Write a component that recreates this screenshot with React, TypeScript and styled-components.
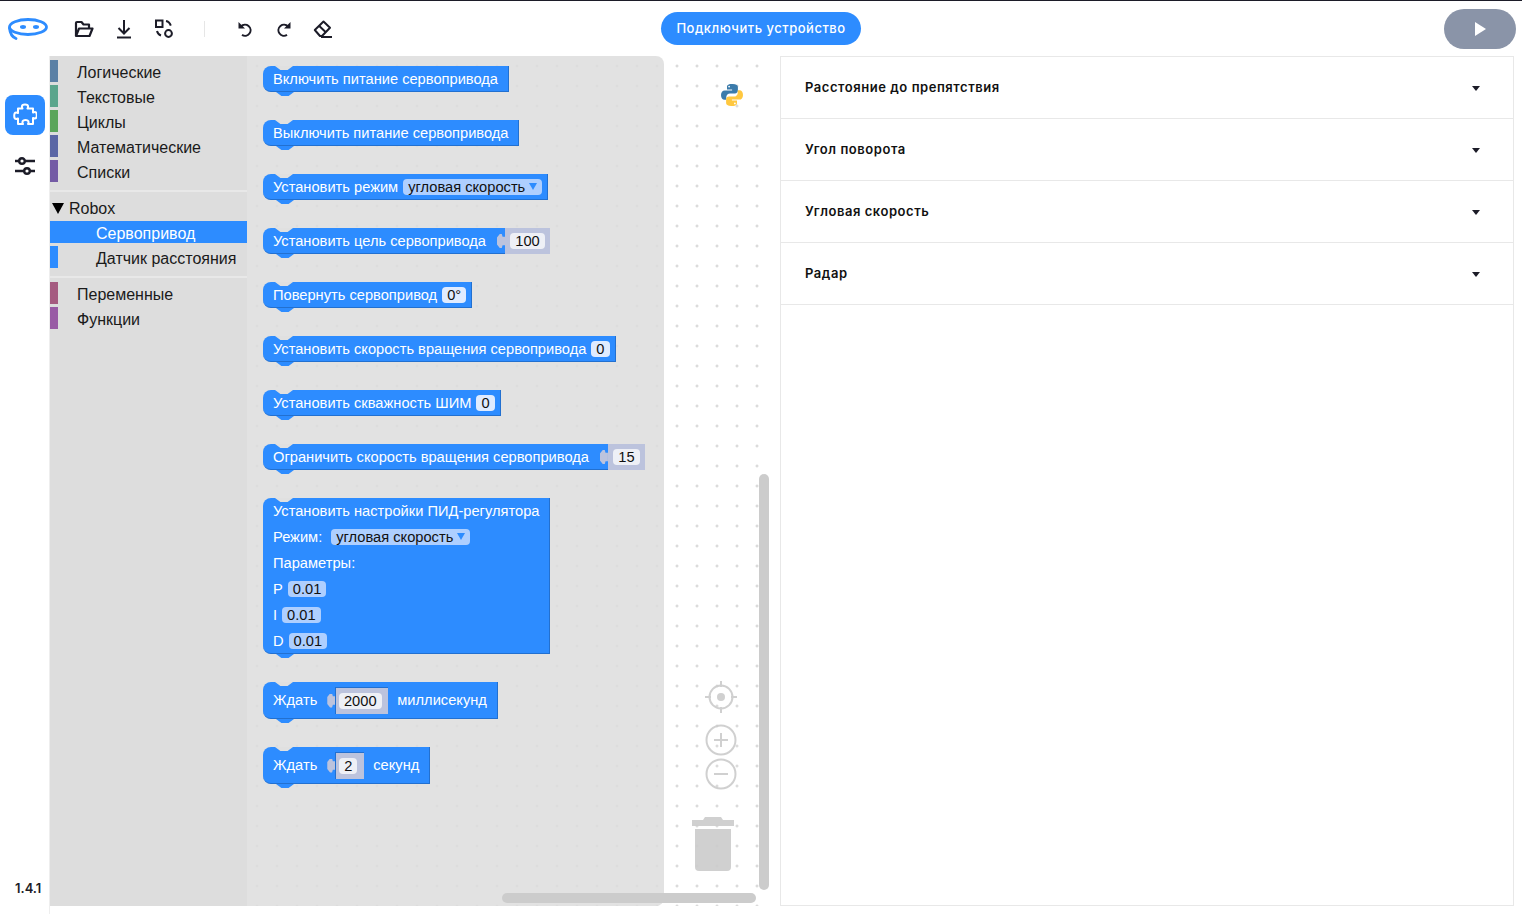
/* eslint-disable */
import React from "react";
import styled, { createGlobalStyle } from "styled-components";

const Global = createGlobalStyle`
    html, body {
        margin: 0;
        padding: 0;
        background: #fff;
    }
    * {
        box-sizing: border-box;
    }
`;

const BLUE = "#2d8cff";
const UI_FONT = `"Inter", "Noto Sans", sans-serif`;
const BLOCK_FONT = `"Liberation Sans", sans-serif`;

const Page = styled.div`
    width: 1522px;
    height: 914px;
    overflow: hidden;
    display: flex;
    flex-direction: column;
    border-top: 1px solid #1c1c28;
    font-family: ${BLOCK_FONT};
`;

const TopBar = styled.header`
    height: 55px;
    flex: none;
    display: flex;
    align-items: center;
    padding-left: 8px;
    position: relative;
`;

const ToolIcon = styled.button<{ $left: number }>`
    width: 24px;
    height: 24px;
    padding: 0;
    margin-left: ${({ $left }) => $left}px;
    border: 0;
    background: none;
    color: #1c1c28;
    display: flex;
    align-items: center;
    justify-content: center;
`;

const Divider = styled.div`
    width: 1px;
    height: 16px;
    background: #e6e6e6;
    margin-left: 28px;
`;

const Connect = styled.button`
    position: absolute;
    left: 661px;
    top: 11px;
    width: 200px;
    height: 33px;
    border: 0;
    border-radius: 17px;
    background: ${BLUE};
    color: #fff;
    font-family: ${UI_FONT};
    font-size: 13px;
    font-weight: 500;
    letter-spacing: 0.5px;
    padding: 0 0 2px;
`;

const Play = styled.button`
    position: absolute;
    left: 1444px;
    top: 8px;
    width: 72px;
    height: 40px;
    border: 0;
    border-radius: 20px;
    background: #8a94a8;
    display: flex;
    align-items: center;
    justify-content: center;
    padding: 0;
`;

const Body = styled.div`
    flex: 1;
    display: flex;
    min-height: 0;
`;

const Rail = styled.aside`
    width: 50px;
    flex: none;
    border-right: 1px solid #eeeeee;
    display: flex;
    flex-direction: column;
    align-items: center;
    padding: 39px 0 0 1px;
    position: relative;
`;

const RailActive = styled.div`
    width: 40px;
    height: 40px;
    border-radius: 8px;
    background: ${BLUE};
    display: flex;
    align-items: center;
    justify-content: center;
`;

const RailIcon = styled.div`
    width: 40px;
    height: 40px;
    margin-top: 11px;
    display: flex;
    align-items: center;
    justify-content: center;
    color: #1c1c28;
`;

const Version = styled.div`
    position: absolute;
    left: 15px;
    top: 824px;
    font-family: ${UI_FONT};
    font-size: 13px;
    font-weight: 600;
    color: #1c1c28;
`;

const Workspace = styled.div`
    width: 720px;
    height: 850px;
    flex: none;
    display: flex;
    position: relative;
    overflow: hidden;
`;

const GridLayer = styled.svg`
    position: absolute;
    inset: 0;
    width: 100%;
    height: 100%;
`;

const Toolbox = styled.nav`
    width: 197px;
    flex: none;
    background: #dddddd;
    padding-top: 4px;
    position: relative;
`;

const Row = styled.div<{ $active?: boolean; $sub?: boolean }>`
    height: 22px;
    margin-bottom: 3px;
    display: flex;
    align-items: center;
    font-size: 16px;
    color: ${({ $active }) => ($active ? "#fff" : "#1a1a1a")};
    background: ${({ $active }) => ($active ? BLUE : "transparent")};
    padding: 3px 0 0 ${({ $sub }) => ($sub ? 46 : 27)}px;
    position: relative;
    white-space: nowrap;
`;

const Chip = styled.span<{ $color: string }>`
    position: absolute;
    left: 0;
    top: 0;
    width: 8px;
    height: 22px;
    background: ${({ $color }) => $color};
`;

const GroupRow = styled.div`
    height: 22px;
    margin-bottom: 3px;
    display: flex;
    align-items: center;
    font-size: 16px;
    color: #1a1a1a;
    padding: 3px 0 0 2px;
`;

const Caret = styled.span`
    width: 0;
    height: 0;
    border-left: 6px solid transparent;
    border-right: 6px solid transparent;
    border-top: 11px solid #000;
    margin-right: 5px;
`;

const Separator = styled.div`
    height: 2px;
    background: #e8e8e8;
    margin: 8px 0 4px;
`;

const Flyout = styled.div`
    width: 417px;
    flex: none;
    background: rgba(221, 221, 221, 0.85);
    border-radius: 0 8px 8px 0;
    padding: 10px 0 0 16px;
    display: flex;
    flex-direction: column;
    align-items: flex-start;
    position: relative;
`;

const Block = styled.div<{ $tall?: boolean; $stack?: boolean; $gap?: number }>`
    position: relative;
    display: flex;
    flex-direction: ${({ $stack }) => ($stack ? "column" : "row")};
    align-items: ${({ $stack }) => ($stack ? "flex-start" : "center")};
    height: ${({ $tall, $stack }) => ($stack ? "156px" : $tall ? "37px" : "26px")};
    margin-bottom: ${({ $gap }) => $gap ?? 28}px;
    padding: ${({ $stack }) => ($stack ? "0 10px" : "0 0 0 10px")};
    background: ${BLUE};
    border-radius: 8px 0 0 8px;
    border-bottom: 1px solid #2270d0;
    border-right: 1px solid #2270d0;
    color: #fff;
    font-size: 14.67px;
    white-space: nowrap;

    &::before {
        content: "";
        position: absolute;
        left: 12px;
        top: 0;
        width: 18px;
        height: 4px;
        background: #e0e0e0;
        clip-path: polygon(0 0, 100% 0, 70% 100%, 30% 100%);
    }

    &::after {
        content: "";
        position: absolute;
        left: 13px;
        bottom: -5px;
        width: 18px;
        height: 4px;
        background: ${BLUE};
        clip-path: polygon(0 0, 100% 0, 70% 100%, 30% 100%);
    }
`;

const Label = styled.span<{ $pad?: number }>`
    margin-right: ${({ $pad }) => $pad ?? 0}px;
`;

const StackLine = styled.div<{ $field?: boolean }>`
    height: 26px;
    display: flex;
    align-items: center;
    padding-top: ${({ $field }) => ($field ? 2 : 0)}px;
`;

const Dropdown = styled.span`
    height: 16px;
    display: flex;
    align-items: center;
    background: #aecfff;
    color: #111;
    border-radius: 4px;
    padding: 0 5px;
    line-height: 16px;
`;

const DropArrow = styled.span`
    width: 0;
    height: 0;
    border-left: 4px solid transparent;
    border-right: 4px solid transparent;
    border-top: 7px solid ${BLUE};
    margin-left: 4px;
`;

const InlineField = styled.span<{ $light?: boolean }>`
    height: 16px;
    display: flex;
    align-items: center;
    background: ${({ $light }) => ($light ? "#dfebff" : "#aecfff")};
    color: #111;
    border-radius: 4px;
    padding: 0 5px;
    margin-left: 5px;
`;

const Shadow = styled.span<{ $inset?: boolean; $width?: number }>`
    position: relative;
    align-self: ${({ $inset }) => ($inset ? "center" : "stretch")};
    margin-left: ${({ $inset }) => ($inset ? 18 : 19)}px;
    width: ${({ $width }) => $width}px;
    height: ${({ $inset }) => ($inset ? "27px" : "26px")};
    margin-right: ${({ $inset }) => ($inset ? 9 : -1)}px;
    padding-right: ${({ $inset }) => ($inset ? 4 : 0)}px;
    background: #bcc3dd;
    display: flex;
    align-items: center;
    justify-content: center;
    border-top: ${({ $inset }) => ($inset ? "1px solid #2270d0" : "0")};
    border-left: ${({ $inset }) => ($inset ? "1px solid #2270d0" : "0")};

    &::before {
        content: "";
        position: absolute;
        left: ${({ $inset }) => ($inset ? -9 : -8)}px;
        top: 6px;
        width: 8px;
        height: 14px;
        background: #bcc3dd;
        clip-path: polygon(35% 0, 60% 0, 70% 20%, 100% 20%, 100% 80%, 70% 80%, 60% 100%, 35% 100%, 0 75%, 0 25%);
    }
`;

const ShadowField = styled.span`
    height: 16px;
    min-width: 16px;
    display: flex;
    align-items: center;
    justify-content: center;
    background: #eef0f6;
    color: #111;
    border-radius: 4px;
    padding: 0 5px;
`;

const Controls = styled.div`
    position: absolute;
    left: 640px;
    top: 630px;
    opacity: 0.9;
`;

const Python = styled.svg`
    position: absolute;
    left: 670px;
    top: 27px;
`;

const ScrollV = styled.div`
    position: absolute;
    left: 709px;
    top: 418px;
    width: 10px;
    height: 416px;
    border-radius: 5px;
    background: #cccccc;
`;

const ScrollH = styled.div`
    position: absolute;
    left: 452px;
    top: 837px;
    width: 254px;
    height: 10px;
    border-radius: 5px;
    background: #cccccc;
`;

const Panel = styled.section`
    width: 734px;
    height: 850px;
    flex: none;
    margin-left: 10px;
    border: 1px solid #e8e8e8;
`;

const PanelRow = styled.div`
    height: 62px;
    border-bottom: 1px solid #e8e8e8;
    display: flex;
    align-items: center;
    justify-content: space-between;
    padding: 0 33px 2px 24px;
    font-family: ${UI_FONT};
    font-size: 13px;
    font-weight: 600;
    letter-spacing: 0.55px;
    color: #111;
`;

const PanelCaret = styled.span`
    width: 0;
    height: 0;
    margin-top: 4px;
    border-left: 4px solid transparent;
    border-right: 4px solid transparent;
    border-top: 5px solid #1c1c28;
`;

const Logo = () => (
    <svg width="40" height="24" viewBox="0 0 40 24" fill="none">
        <ellipse cx="20" cy="10" rx="18.5" ry="7.5" stroke={BLUE} strokeWidth="2.8" />
        <path d="M1.500 11C2 16 4 20 8 21.500" stroke={BLUE} strokeWidth="2.800" strokeLinecap="round" />
        <ellipse cx="15" cy="10" rx="3" ry="1.900" fill={BLUE} />
        <ellipse cx="28" cy="10" rx="3" ry="1.900" fill={BLUE} />
    </svg>
);

const Folder = () => (
    <svg width="20" height="18" viewBox="0 0 20 18" fill="none" stroke="currentColor" strokeWidth="2.200" strokeLinejoin="round">
        <path d="M2 16V3a1 1 0 0 1 1-1h4.500l2 2.500H15V8" />
        <path d="M2 16H15.500L18.500 8.500H5Z" />
    </svg>
);

const Download = () => (
    <svg width="18" height="20" viewBox="0 0 18 20" fill="none" stroke="currentColor" strokeWidth="2">
        <path d="M9 1v13M3.500 9 9 14.500 14.500 9" />
        <path d="M2 18.500h14" />
    </svg>
);

const Convert = () => (
    <svg width="20" height="20" viewBox="0 0 20 20" fill="none" stroke="currentColor" strokeWidth="2">
        <rect x="2" y="1.500" width="6.500" height="6.500" />
        <circle cx="14.500" cy="14.500" r="3.400" />
        <path d="M12 2c2.200.4 4 2.200 4.800 4.600" />
        <path d="M3 12c.5 2 2 3.800 4 4.500" />
    </svg>
);

const Undo = ({ flip }: { flip?: boolean }) => (
    <svg width="16" height="16" viewBox="0 0 16 16" fill="none" style={flip ? { transform: "scaleX(-1)" } : undefined}>
        <path d="M1.500 1v6.500H8Z" fill="#1c1c28" />
        <path d="M4 5.500A5.500 5.500 0 1 1 5 13.800" stroke="#1c1c28" strokeWidth="2" />
    </svg>
);

const EraserIcon = () => (
    <svg width="20" height="20" viewBox="0 0 20 20" fill="none" stroke="currentColor" strokeWidth="2" strokeLinejoin="round">
        <path d="M1.800 11 10.500 2.500 17 8.800 9 17H7Z" />
        <path d="M6 6.800 12.800 13.200" />
        <path d="M8 18H19" />
    </svg>
);

const Puzzle = () => (
    <svg width="24" height="24" viewBox="0 0 24 24" fill="none" stroke="#fff" strokeWidth="2" strokeLinejoin="round">
        <path d="M9.500 5.500c-.4-.8-.6-1.200-.6-1.800 0-1.300 1.400-2.300 3.100-2.300s3.100 1 3.100 2.300c0 .6-.2 1-.6 1.800H20V9.500c.8-.4 1.200-.6 1.800-.6 1.200 0 2 1.300 2 3.350s-.8 3.350-2 3.350c-.6 0-1-.2-1.800-.6V21H15c.4-.8.6-1.200.6-1.800 0-1.200-1.500-2.200-3.100-2.200s-3.100 1-3.100 2.200c0 .6.2 1 .6 1.800H5V15.500c-.8.4-1.200.6-1.800.6-1.200 0-2-1.300-2-3.350s.8-3.350 2-3.350c.6 0 1 .2 1.800.6V5.500Z" />
    </svg>
);

const Sliders = () => (
    <svg width="24" height="20" viewBox="0 0 24 20" fill="none" stroke="currentColor" strokeWidth="2.400">
        <path d="M2 5h4M12 5h10M2 15h9M17 15h5" />
        <circle cx="9" cy="5" r="2.800" />
        <circle cx="14" cy="15" r="2.800" />
    </svg>
);

const Grid = () => (
    <GridLayer>
        <defs>
            <pattern id="dots" x="-3" y="0" width="20" height="20" patternUnits="userSpaceOnUse">
                <path d="M10 8.500v3M8.500 10h3" stroke="#cfcfcf" strokeWidth="1" />
            </pattern>
        </defs>
        <rect width="100%" height="100%" fill="url(#dots)" />
    </GridLayer>
);

const ControlIcons = () => (
    <svg width="60" height="200" viewBox="0 0 60 200" fill="none" stroke="#cccccc" strokeWidth="2" style={{ overflow: "visible" }}>
        <circle cx="31" cy="11" r="11.500" />
        <path d="M31-5v6M31 21v6M15 11h6M41 11h6" />
        <circle cx="31" cy="11" r="4" fill="#cccccc" stroke="none" />
        <circle cx="31" cy="54" r="14.500" />
        <path d="M31 47v14M24 54h14" />
        <circle cx="31" cy="88" r="14.500" />
        <path d="M24 88h14" />
        <path d="M2 140h42v-6H33l-2-3H15l-2 3H2Z" fill="#cccccc" stroke="none" />
        <path d="M5 143h36v38a4 4 0 0 1-4 4H9a4 4 0 0 1-4-4Z" fill="#cccccc" stroke="none" />
    </svg>
);

const PythonLogo = () => (
    <Python width="24" height="24" viewBox="0 0 24 24">
        <path d="M11.800 1C7.500 1 7 2.900 7 4v2.600h5.100v.8H4.600C2.600 7.400 1 9 1 12.100c0 3.100 1.500 4.700 3.400 4.700h1.900v-2.700c0-2 1.700-3.700 3.700-3.700h5c1.600 0 2.900-1.300 2.900-2.900V4c0-1.600-1.600-3-5.100-3ZM9.100 2.700a.9.900 0 1 1 0 1.800.9.900 0 0 1 0-1.800Z" fill="#3b7bab" />
        <path d="M12.200 23c4.300 0 4.800-1.900 4.800-3v-2.600h-5.100v-.8h7.500c2 0 3.600-1.600 3.600-4.700 0-3.100-1.500-4.700-3.400-4.700h-1.900v2.700c0 2-1.700 3.700-3.700 3.700h-5c-1.600 0-2.900 1.300-2.900 2.900V20c0 1.600 1.600 3 5.100 3Zm2.700-1.700a.9.900 0 1 1 0-1.800.9.900 0 0 1 0 1.800Z" fill="#ffc840" />
    </Python>
);

const categories1 = [
    { name: "Логические", color: "#5b80a5" },
    { name: "Текстовые", color: "#5ba58c" },
    { name: "Циклы", color: "#5ba55b" },
    { name: "Математические", color: "#5b67a5" },
    { name: "Списки", color: "#745ba5" },
];

const categories2 = [
    { name: "Переменные", color: "#a55b80" },
    { name: "Функции", color: "#995ba5" },
];

const panelRows = ["Расстояние до препятствия", "Угол поворота", "Угловая скорость", "Радар"];

export default function App() {
    return (
        <Page>
            <Global />
            <TopBar>
                <Logo />
                <ToolIcon $left={24}><Folder /></ToolIcon>
                <ToolIcon $left={16}><Download /></ToolIcon>
                <ToolIcon $left={16}><Convert /></ToolIcon>
                <Divider />
                <ToolIcon $left={28}><Undo /></ToolIcon>
                <ToolIcon $left={15}><Undo flip /></ToolIcon>
                <ToolIcon $left={15}><EraserIcon /></ToolIcon>
                <Connect>Подключить устройство</Connect>
                <Play>
                    <svg width="12" height="14" viewBox="0 0 12 14">
                        <path d="M1 0v14l11-7Z" fill="#fff" />
                    </svg>
                </Play>
            </TopBar>
            <Body>
                <Rail>
                    <RailActive><Puzzle /></RailActive>
                    <RailIcon><Sliders /></RailIcon>
                    <Version>1.4.1</Version>
                </Rail>
                <Workspace>
                    <Grid />
                    <Toolbox>
                        {categories1.map((c) => (
                            <Row key={c.name}><Chip $color={c.color} />{c.name}</Row>
                        ))}
                        <Separator />
                        <GroupRow><Caret />Robox</GroupRow>
                        <Row $sub $active>Сервопривод</Row>
                        <Row $sub><Chip $color={BLUE} />Датчик расстояния</Row>
                        <Separator />
                        {categories2.map((c) => (
                            <Row key={c.name}><Chip $color={c.color} />{c.name}</Row>
                        ))}
                    </Toolbox>
                    <Flyout>
                        <Block><Label $pad={10}>Включить питание сервопривода</Label></Block>
                        <Block><Label $pad={9}>Выключить питание сервопривода</Label></Block>
                        <Block>
                            <Label $pad={5}>Установить режим</Label>
                            <Dropdown>угловая скорость<DropArrow /></Dropdown>
                            <Label $pad={5} />
                        </Block>
                        <Block>
                            <Label>Установить цель сервопривода</Label>
                            <Shadow $width={45}><ShadowField>100</ShadowField></Shadow>
                        </Block>
                        <Block>
                            <Label>Повернуть сервопривод</Label>
                            <InlineField $light>0°</InlineField>
                            <Label $pad={5} />
                        </Block>
                        <Block>
                            <Label>Установить скорость вращения сервопривода</Label>
                            <InlineField $light>0</InlineField>
                            <Label $pad={5} />
                        </Block>
                        <Block>
                            <Label>Установить скважность ШИМ</Label>
                            <InlineField $light>0</InlineField>
                            <Label $pad={5} />
                        </Block>
                        <Block>
                            <Label>Ограничить скорость вращения сервопривода</Label>
                            <Shadow $width={37}><ShadowField>15</ShadowField></Shadow>
                        </Block>
                        <Block $stack>
                            <StackLine>Установить настройки ПИД-регулятора</StackLine>
                            <StackLine>
                                <Label $pad={9}>Режим:</Label>
                                <Dropdown>угловая скорость<DropArrow /></Dropdown>
                            </StackLine>
                            <StackLine>Параметры:</StackLine>
                            <StackLine $field>P<InlineField>0.01</InlineField></StackLine>
                            <StackLine $field>I<InlineField>0.01</InlineField></StackLine>
                            <StackLine $field>D<InlineField>0.01</InlineField></StackLine>
                        </Block>
                        <Block $tall>
                            <Label>Ждать</Label>
                            <Shadow $inset $width={53}><ShadowField>2000</ShadowField></Shadow>
                            <Label $pad={10}>миллисекунд</Label>
                        </Block>
                        <Block $tall $gap={0}>
                            <Label>Ждать</Label>
                            <Shadow $inset $width={29}><ShadowField>2</ShadowField></Shadow>
                            <Label $pad={10}>секунд</Label>
                        </Block>
                    </Flyout>
                    <PythonLogo />
                    <Controls><ControlIcons /></Controls>
                    <ScrollV />
                    <ScrollH />
                </Workspace>
                <Panel>
                    {panelRows.map((r) => (
                        <PanelRow key={r}>
                            {r}
                            <PanelCaret />
                        </PanelRow>
                    ))}
                </Panel>
            </Body>
        </Page>
    );
}
